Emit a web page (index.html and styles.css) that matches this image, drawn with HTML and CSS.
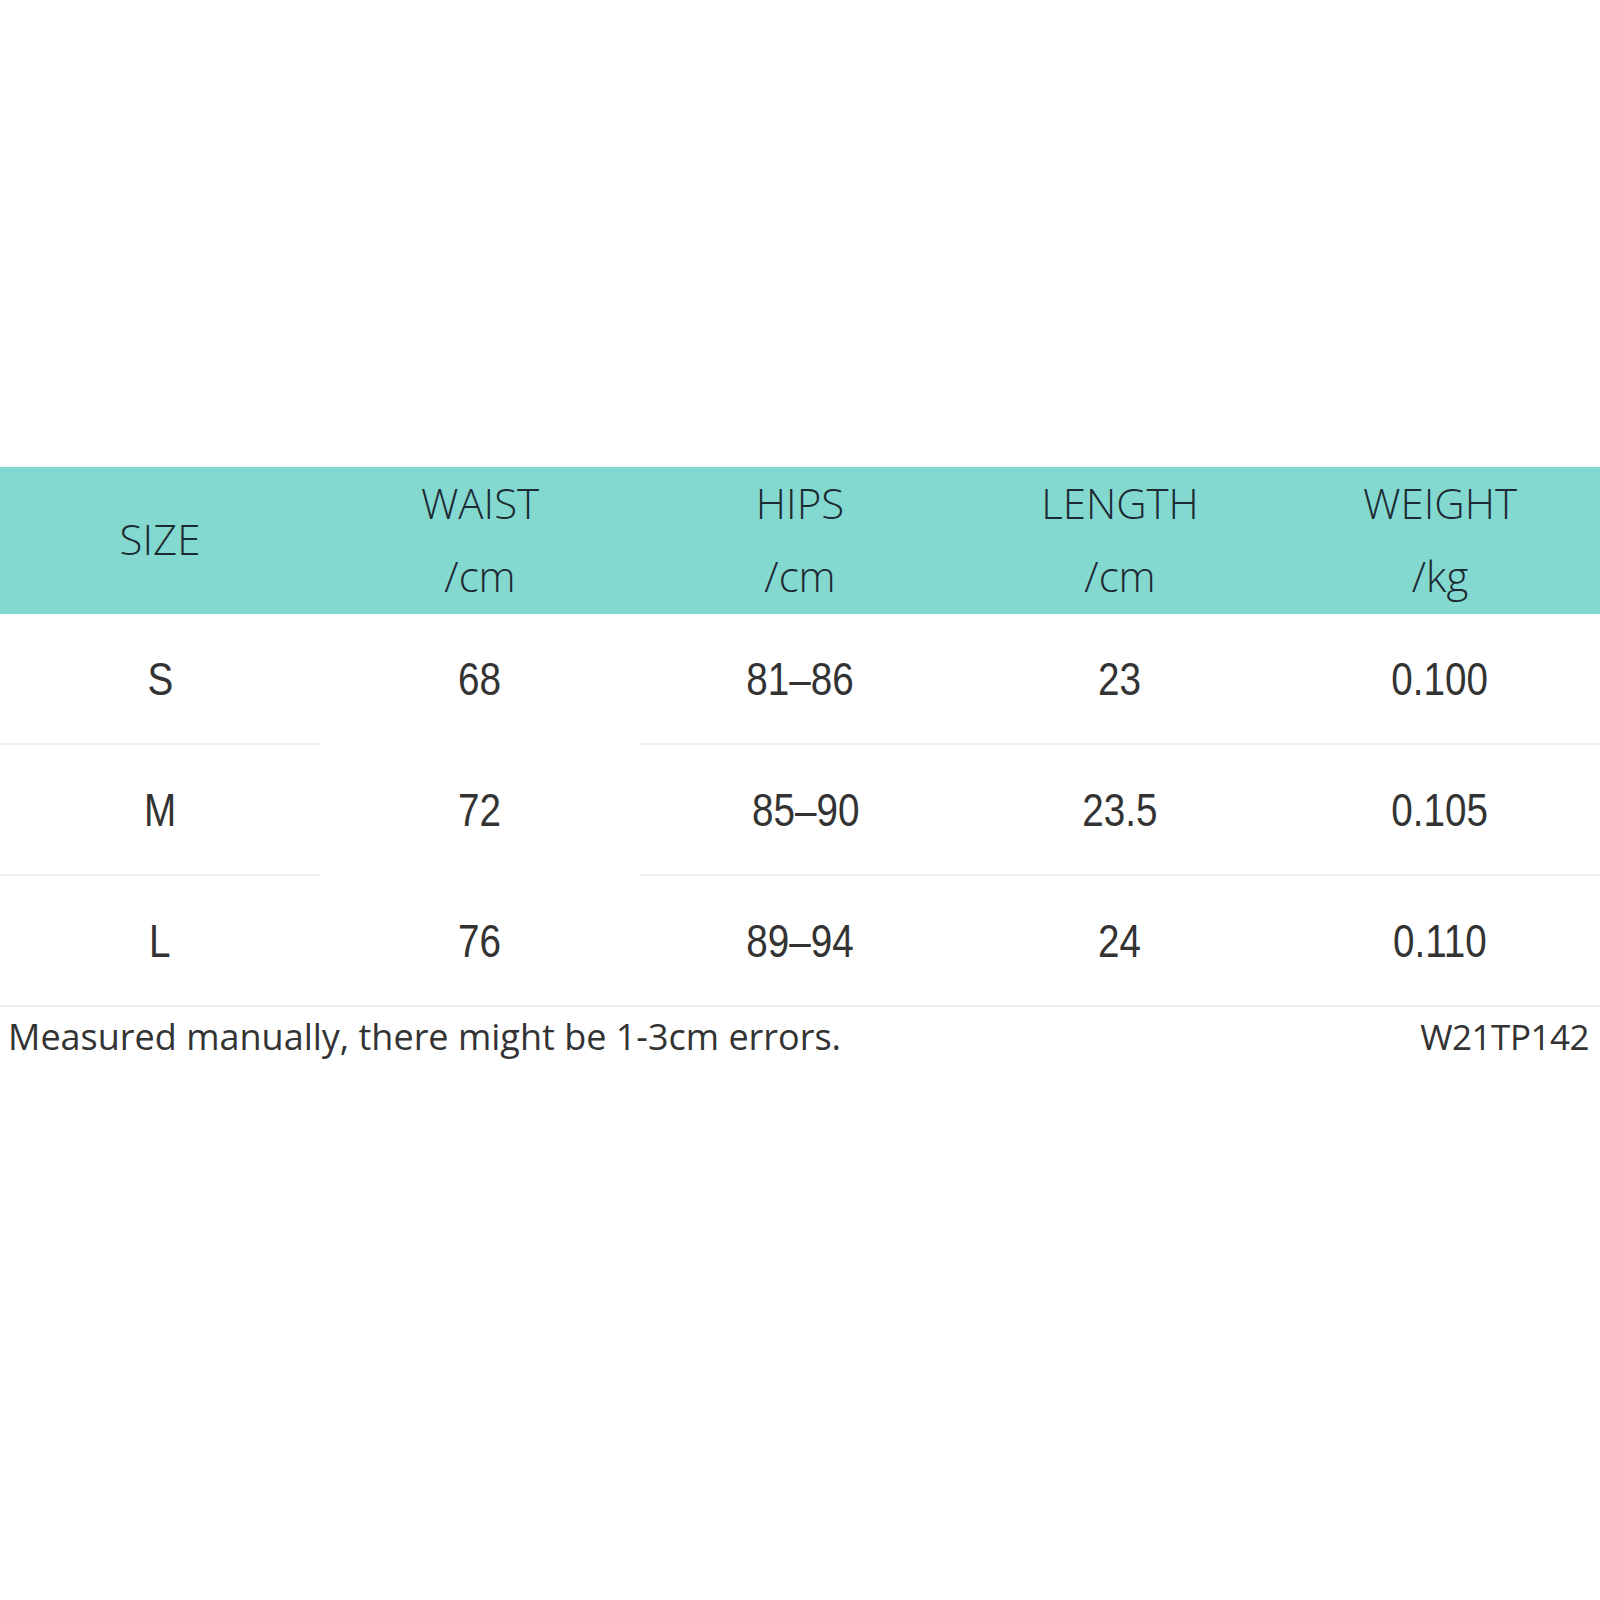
FILE: index.html
```html
<!DOCTYPE html>
<html>
<head>
<meta charset="utf-8">
<link rel="stylesheet" href="styles.css">
</head>
<body>
<main class="page">
  <table class="size-table">
    <thead>
      <tr>
        <th><div class="hwrap"><span class="hline">SIZE</span></div></th>
        <th><div class="hwrap"><span class="hline">WAIST</span><span class="hline">/cm</span></div></th>
        <th><div class="hwrap"><span class="hline">HIPS</span><span class="hline">/cm</span></div></th>
        <th><div class="hwrap"><span class="hline">LENGTH</span><span class="hline">/cm</span></div></th>
        <th><div class="hwrap"><span class="hline">WEIGHT</span><span class="hline">/kg</span></div></th>
      </tr>
    </thead>
    <tbody>
      <tr>
        <td><span class="num">S</span></td>
        <td class="no-line"><span class="num">68</span></td>
        <td><span class="num">81–86</span></td>
        <td><span class="num">23</span></td>
        <td><span class="num">0.100</span></td>
      </tr>
      <tr>
        <td><span class="num">M</span></td>
        <td class="no-line"><span class="num">72</span></td>
        <td><span class="num">&nbsp;85–90</span></td>
        <td><span class="num">23.5</span></td>
        <td><span class="num">0.105</span></td>
      </tr>
      <tr>
        <td><span class="num">L</span></td>
        <td><span class="num">76</span></td>
        <td><span class="num">89–94</span></td>
        <td><span class="num">24</span></td>
        <td><span class="num">0.110</span></td>
      </tr>
    </tbody>
  </table>
  <div class="note">
    <span>Measured manually, there might be 1-3cm errors.</span>
    <span class="code">W21TP142</span>
  </div>
</main>
</body>
</html>
```

FILE: styles.css
```css
html, body {
  margin: 0;
  padding: 0;
  background: #ffffff;
}

.page {
  padding-top: 467px;
  width: 1600px;
}

.size-table {
  width: 1600px;
  border-collapse: collapse;
  table-layout: fixed;
}

.size-table th {
  background: #83d9cf;
  height: 147px;
  padding: 0;
  font-family: "Open Sans", "DejaVu Sans", sans-serif;
  font-weight: 300;
  font-size: 42px;
  color: #1c2a33;
  text-align: center;
  vertical-align: middle;
}

.hwrap {
  margin-top: -4px;
}

.hline {
  display: block;
  line-height: 73px;
}

.size-table td {
  height: 129px;
  padding: 0;
  text-align: center;
  vertical-align: middle;
  border-bottom: 2px solid #eeeeee;
  font-family: "Liberation Sans", Arial, sans-serif;
  font-size: 46px;
  color: #333333;
}

.size-table td.no-line {
  border-bottom-color: #ffffff;
}

.num {
  display: inline-block;
  transform: scaleX(0.84);
}

.note {
  display: flex;
  justify-content: space-between;
  align-items: center;
  height: 58px;
  padding: 0 11px 0 8px;
  font-family: "Open Sans", "DejaVu Sans", sans-serif;
  font-size: 36px;
  color: #333333;
}

.code {
  letter-spacing: -0.5px;
  font-size: 35px;
}
```
